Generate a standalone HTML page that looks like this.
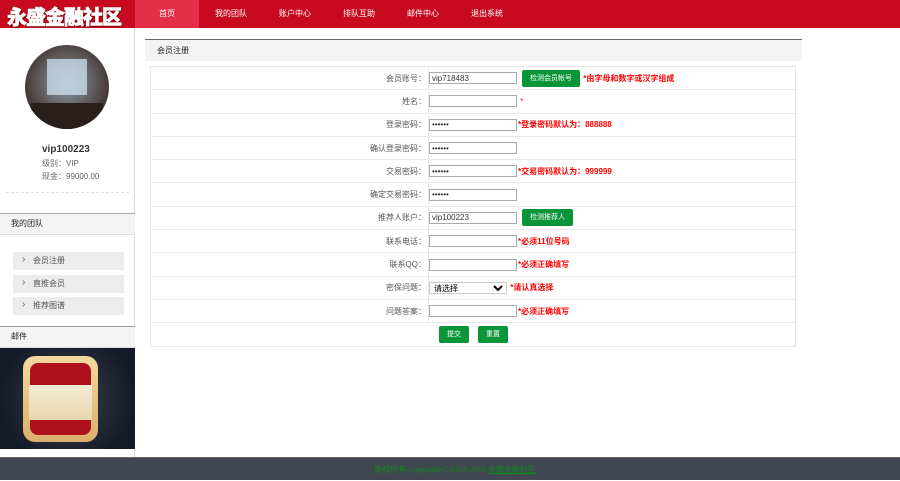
<!DOCTYPE html>
<html><head><meta charset="utf-8"><style>
*{margin:0;padding:0;box-sizing:border-box}
body{width:900px;height:480px;position:relative;background:#fff;font-family:"Liberation Sans","Noto Sans CJK SC",sans-serif;font-size:8px;color:#333;overflow:hidden}
.hd{position:absolute;left:0;top:0;width:900px;height:28px;background:#c80a20}
.logo{position:absolute;left:7px;top:1px;font-size:20px;font-weight:900;color:#fff;-webkit-text-stroke:0.6px #fff;text-shadow:0 0 2px #800,1px 1px 1px #600;font-family:"Noto Sans CJK SC",sans-serif;letter-spacing:-1px}
.nav{position:absolute;left:135px;top:0;height:28px}
.nav a{float:left;width:64px;height:28px;line-height:28px;text-align:center;color:#fff;font-size:8px;text-decoration:none}
.nav a.on{background:#e52e47}
.side{position:absolute;left:0;top:28px;width:135px;height:429px;border-right:1px solid #ddd}
.av{position:absolute;left:25px;top:17px;width:84px;height:84px;border-radius:50%;background:radial-gradient(circle at 50% 45%,#8aa0b0 0,#6b6a6c 35%,#3b2e2a 75%);overflow:hidden}
.av i{position:absolute;left:22px;top:14px;width:40px;height:36px;background:#c9dbe8;opacity:.8}
.av b{position:absolute;left:6px;top:58px;width:72px;height:26px;background:#2a1e1c}
.sec{position:absolute;left:0;width:135px;height:22px;background:#f4f4f4;border-top:1px solid #aaa;border-bottom:1px solid #ddd;line-height:20px;padding-left:11px;font-size:8px;color:#222}
.mi{position:absolute;left:13px;width:111px;height:18px;background:#ececec;line-height:18px;padding-left:20px;font-size:8px;color:#555}
.mi:before{content:"›";position:absolute;left:9px;top:-1px;font-size:10px;color:#666}
.tit{position:absolute;left:145px;top:39px;width:657px;height:22px;background:#f3f3f3;border-top:1px solid #666;line-height:21px;padding-left:12px;font-size:8px;color:#222}
table{position:absolute;left:150px;top:66px;width:646px;border-collapse:collapse;border:1px solid #e6e6e6}
td{height:23.3px;border-bottom:1px solid #e8e8e8;font-size:8px;color:#555;padding:0}
td.l{width:278px;text-align:right;padding-right:2px;border-right:1px solid #e8e8e8}
input{width:88px;height:12px;border:1px solid #aaa;font-size:8px;padding-left:2px;vertical-align:middle;font-family:"Liberation Sans",sans-serif;color:#333}
.btn{display:inline-block;background:#0a9638;color:#fff;font-size:7px;height:17px;line-height:17px;padding:0 8px;border-radius:2px;vertical-align:middle;margin-left:5px}
.red{color:#f00;font-weight:bold;font-size:8px;vertical-align:middle;margin-left:1px}
select{width:78px;height:12px;font-size:8px;border:1px solid #ccc;vertical-align:middle;background:#fff}
.ft{position:absolute;left:0;top:457px;width:900px;height:23px;background:#404750;border-top:1px solid #666;color:#0b8a1a;font-size:8px;text-align:center;line-height:23px;padding-left:10px;font-family:"Liberation Serif","Noto Sans CJK SC",serif}
</style></head><body>
<div class="hd"><div class="logo">永盛金融社区</div>
<div class="nav"><a class="on">首页</a><a>我的团队</a><a>账户中心</a><a>排队互助</a><a>邮件中心</a><a>退出系统</a></div></div>
<div class="side">
<div class="av"><i></i><b></b></div>
<div style="position:absolute;left:42px;top:116px;font-size:10px;font-weight:bold;color:#333">vip100223</div>
<div style="position:absolute;left:42px;top:130px;color:#666">级别：VIP</div>
<div style="position:absolute;left:42px;top:143px;color:#666">现金：99000.00</div>
<div style="position:absolute;left:6px;top:164px;width:123px;border-top:1px dashed #e0e0e0"></div>
<div class="sec" style="top:185px">我的团队</div>
<div class="mi" style="top:224px">会员注册</div>
<div class="mi" style="top:247px">直推会员</div>
<div class="mi" style="top:269px">推荐图谱</div>
<div class="sec" style="top:298px;border-top:1px solid #999">邮件</div>
<div style="position:absolute;left:0;top:320px;width:135px;height:101px;background:radial-gradient(circle,#3a4050 0,#151a28 80%)">
<div style="position:absolute;left:23px;top:8px;width:75px;height:86px;border-radius:12px;background:linear-gradient(#f3d9a0,#d9b06a);"></div>
<div style="position:absolute;left:30px;top:15px;width:61px;height:72px;border-radius:8px;background:#b0101c"></div>
<div style="position:absolute;left:29px;top:37px;width:63px;height:35px;background:linear-gradient(#f5ecd6,#e8d6ad)"></div>
</div>
</div>
<div class="tit">会员注册</div>
<table>
<tr><td class="l">会员账号：</td><td><input value="vip718483"><span class="btn">检测会员帐号</span> <span class="red">*由字母和数字或汉字组成</span></td></tr>
<tr><td class="l">姓名：</td><td><input> <span class="red" style="font-weight:normal">*</span></td></tr>
<tr><td class="l">登录密码：</td><td><input value="••••••"><span class="red">*登录密码默认为：888888</span></td></tr>
<tr><td class="l">确认登录密码：</td><td><input value="••••••"></td></tr>
<tr><td class="l">交易密码：</td><td><input value="••••••"><span class="red">*交易密码默认为：999999</span></td></tr>
<tr><td class="l">确定交易密码：</td><td><input value="••••••"></td></tr>
<tr><td class="l">推荐人账户：</td><td><input value="vip100223"><span class="btn">检测推荐人</span></td></tr>
<tr><td class="l">联系电话：</td><td><input><span class="red">*必须11位号码</span></td></tr>
<tr><td class="l">联系QQ：</td><td><input><span class="red">*必须正确填写</span></td></tr>
<tr><td class="l">密保问题：</td><td><select><option>请选择</option></select> <span class="red">*请认真选择</span></td></tr>
<tr><td class="l">问题答案：</td><td><input><span class="red">*必须正确填写</span></td></tr>
<tr><td colspan="2" style="padding-left:288px"><span class="btn" style="margin:0">提交</span><span class="btn" style="margin-left:9px">重置</span></td></tr>
</table>
<div class="ft">版权所有 Copyright(C)2016-2018 <u>永盛金融社区</u></div>
</body></html>
